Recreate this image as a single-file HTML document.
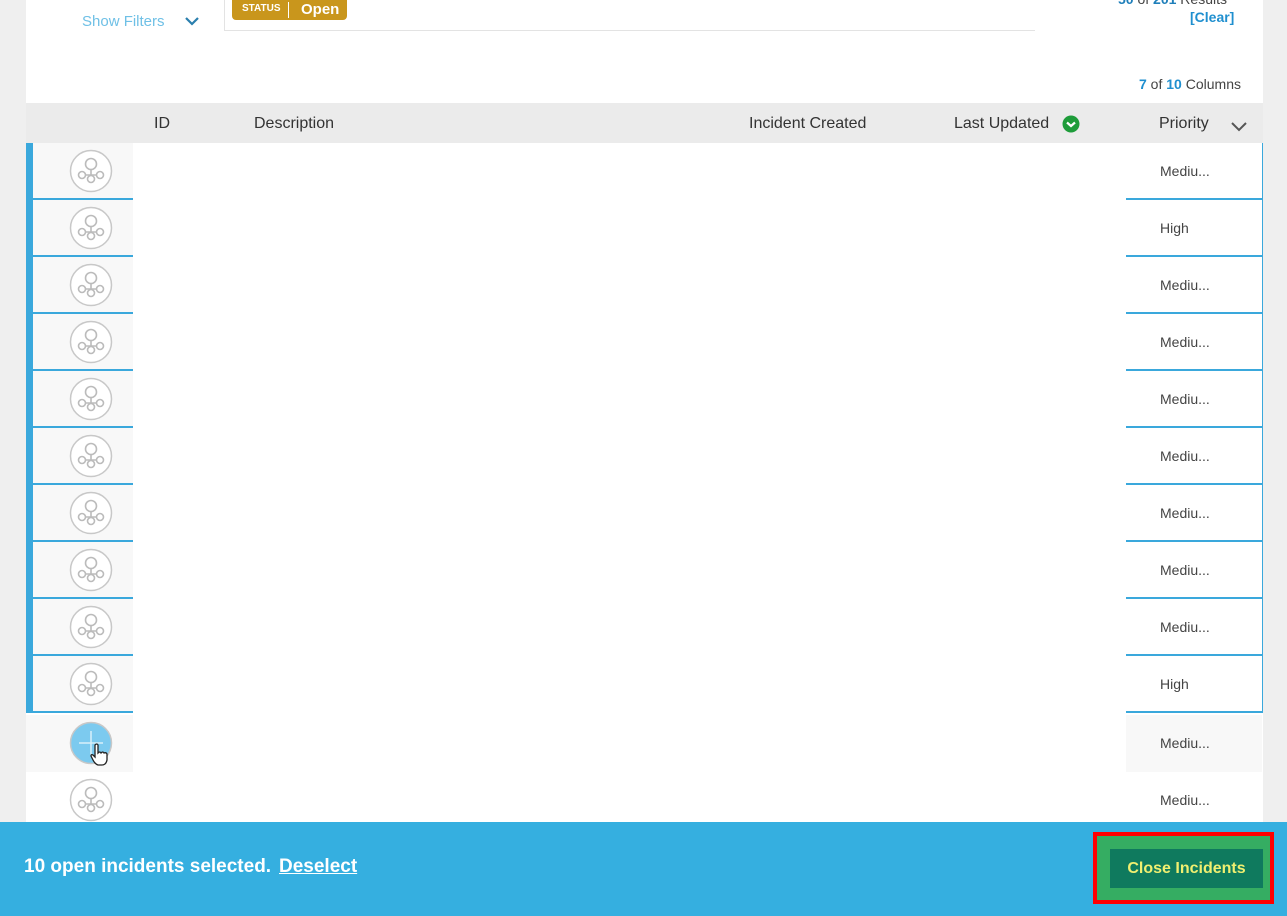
<!DOCTYPE html>
<html><head><style>
body{margin:0;width:1287px;height:916px;position:relative;overflow:hidden;background:#fff;font-family:"Liberation Sans",sans-serif}
.a{position:absolute}
.lc{position:absolute;left:26px;width:107px;height:56px;background:#f8f8f8}
.rc{position:absolute;left:1126px;width:136px;height:56px;background:#fff;font-size:14px;color:#444;line-height:56px;text-indent:34px}
.sel .rc{border-right:1px solid #3aa8dc;border-bottom:2px solid #3aa8dc;height:55px}
.sel .lc{border-bottom:2px solid #3aa8dc;height:55px}
.bar{position:absolute;left:26px;width:7px;height:57px;background:#3aa8dc;z-index:2}
.ic{position:absolute;left:43px;top:6px}
</style></head><body>
<div class="a" style="left:0;top:0;width:26px;height:916px;background:#efefef"></div>
<div class="a" style="left:1263px;top:0;width:24px;height:916px;background:#efefef"></div>
<div class="a" style="left:82px;top:13px;font-size:15px;color:#6fc0e6">Show Filters</div>
<svg class="a" style="left:185px;top:17px" width="14" height="10"><path d="M1 1 L7 7 L13 1" stroke="#2a7fae" stroke-width="2.2" fill="none"/></svg>
<div class="a" style="left:224px;top:0;width:810px;height:30px;border-left:1px solid #e3e3e3;border-bottom:1px solid #e3e3e3"></div>
<div class="a" style="left:232px;top:0;width:115px;height:20px;background:#c9961c;border-radius:0 0 4px 4px;color:#fff"><span class="a" style="left:10px;top:3px;font-size:10px;font-weight:bold">STATUS</span><span class="a" style="left:56px;top:2px;width:1px;height:16px;background:#fff"></span><span class="a" style="left:69px;top:1px;font-size:15px;font-weight:bold">Open</span></div>
<div class="a" style="left:1118px;top:-9px;font-size:14px;color:#444"><b style="color:#1f7fba">50</b> of <b style="color:#1f7fba">201</b> Results</div>
<div class="a" style="left:1190px;top:9px;font-size:14px;font-weight:bold;color:#1f8fcf">[Clear]</div>
<div class="a" style="left:1139px;top:76px;font-size:14px;color:#444"><b style="color:#1f8fcf">7</b> of <b style="color:#1f8fcf">10</b> Columns</div>
<div class="a" style="left:26px;top:103px;width:1237px;height:40px;background:#ebebeb;font-size:16px;color:#333">
<span class="a" style="left:128px;top:12px">ID</span>
<span class="a" style="left:228px;top:12px">Description</span>
<span class="a" style="left:723px;top:12px">Incident Created</span>
<span class="a" style="left:928px;top:12px">Last Updated</span>
<svg class="a" style="left:1036px;top:12px" width="18" height="18"><circle cx="9" cy="9" r="8.5" fill="#1e9c3a"/><path d="M5 7.5 L9 11 L13 7.5" stroke="#fff" stroke-width="2.2" fill="none"/></svg>
<span class="a" style="left:1133px;top:12px">Priority</span>
<svg class="a" style="left:1205px;top:19px" width="16" height="10"><path d="M1 1 L8 8 L15 1" stroke="#555" stroke-width="2" fill="none"/></svg>
</div>
<svg width="0" height="0" style="position:absolute"><defs><g id="ic"><circle cx="22" cy="22" r="20.5" fill="#fff" stroke="#c8c8c8" stroke-width="1.5"/><g fill="none" stroke="#bbb" stroke-width="1.6"><circle cx="22" cy="15" r="5.5"/><circle cx="13" cy="26" r="3.5"/><circle cx="22" cy="30" r="3.5"/><circle cx="31" cy="26" r="3.5"/><path d="M22 20.5 V26.5 M16.5 26 H27.5"/></g></g></defs></svg>

<div class="sel">
<div class="a" style="top:143px;left:0"><div class="lc"><svg class="ic" width="44" height="44"><use href="#ic"/></svg></div><div class="bar"></div><div class="rc">Mediu...</div></div>
<div class="a" style="top:200px;left:0"><div class="lc"><svg class="ic" width="44" height="44"><use href="#ic"/></svg></div><div class="bar"></div><div class="rc">High</div></div>
<div class="a" style="top:257px;left:0"><div class="lc"><svg class="ic" width="44" height="44"><use href="#ic"/></svg></div><div class="bar"></div><div class="rc">Mediu...</div></div>
<div class="a" style="top:314px;left:0"><div class="lc"><svg class="ic" width="44" height="44"><use href="#ic"/></svg></div><div class="bar"></div><div class="rc">Mediu...</div></div>
<div class="a" style="top:371px;left:0"><div class="lc"><svg class="ic" width="44" height="44"><use href="#ic"/></svg></div><div class="bar"></div><div class="rc">Mediu...</div></div>
<div class="a" style="top:428px;left:0"><div class="lc"><svg class="ic" width="44" height="44"><use href="#ic"/></svg></div><div class="bar"></div><div class="rc">Mediu...</div></div>
<div class="a" style="top:485px;left:0"><div class="lc"><svg class="ic" width="44" height="44"><use href="#ic"/></svg></div><div class="bar"></div><div class="rc">Mediu...</div></div>
<div class="a" style="top:542px;left:0"><div class="lc"><svg class="ic" width="44" height="44"><use href="#ic"/></svg></div><div class="bar"></div><div class="rc">Mediu...</div></div>
<div class="a" style="top:599px;left:0"><div class="lc"><svg class="ic" width="44" height="44"><use href="#ic"/></svg></div><div class="bar"></div><div class="rc">Mediu...</div></div>
<div class="a" style="top:656px;left:0"><div class="lc"><svg class="ic" width="44" height="44"><use href="#ic"/></svg></div><div class="bar"></div><div class="rc">High</div></div>
</div>
<div class="a" style="top:715px;left:0"><div class="lc" style="height:57px"><svg class="ic" width="44" height="44"><circle cx="22" cy="22" r="20.5" fill="#7ccaef" stroke="#c8c8c8" stroke-width="1.5"/><path d="M22 10 V34 M10 22 H34" stroke="#d8effa" stroke-width="1.5"/></svg>
<svg class="a" style="left:63px;top:28px" width="20" height="24"><path d="M6 2 Q8 0 9 2 V10 Q11 8 12 10 Q14 8 15 10 Q17 9 18 11 V17 Q17 22 13 22 H9 Q6 21 4 17 L2 13 Q2 11 4 12 L6 14 Z" fill="#fff" stroke="#222" stroke-width="1.3"/></svg></div>
<div class="rc" style="height:57px;background:#f8f8f8">Mediu...</div></div>
<div class="a" style="top:772px;left:0"><div class="lc" style="background:#fff;height:50px"><svg class="ic" width="44" height="44"><use href="#ic"/></svg></div><div class="rc">Mediu...</div></div>

<div class="a" style="left:0;top:822px;width:1287px;height:94px;background:#35afe0"></div>
<div class="a" style="left:24px;top:856px;font-size:19px;font-weight:bold;color:#fff">10 open incidents selected.</div>
<div class="a" style="left:279px;top:856px;font-size:19px;font-weight:bold;color:#fff;text-decoration:underline">Deselect</div>
<div class="a" style="left:1093px;top:832px;width:173px;height:64px;border:4px solid #f00;background:#35ad62"></div>
<div class="a" style="left:1110px;top:849px;width:153px;height:39px;background:#0f7a5e;color:#f0ef70;font-size:16px;font-weight:bold;text-align:center;line-height:39px">Close Incidents</div>
</body></html>
